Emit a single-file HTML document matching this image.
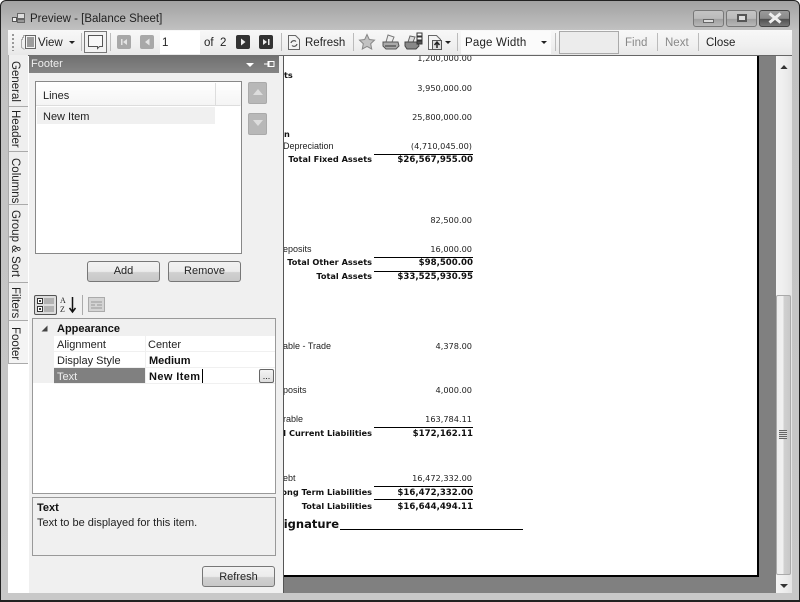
<!DOCTYPE html>
<html><head><meta charset="utf-8"><style>
html,body{margin:0;padding:0;width:800px;height:602px;overflow:hidden;background:#fff}
*{box-sizing:border-box}
.a,.t,.n,.b{position:absolute}
.t{font:11px/18px "Liberation Sans",sans-serif;color:#222;white-space:nowrap}
.m{font-size:11.5px}
.n{font:8.2px/12px "DejaVu Sans",sans-serif;color:#222;white-space:nowrap;text-align:right}
.l{font:9px/12px "Liberation Sans",sans-serif;color:#222;white-space:nowrap;position:absolute}
.nb{font:bold 8.2px/12px "DejaVu Sans",sans-serif;color:#111;white-space:nowrap;position:absolute;text-align:right}
.na{font-size:8.6px;margin-top:1px}
.b{background:linear-gradient(#f2f2f2,#ececec 50%,#d0d0d0 55%,#c8c8c8);border:1px solid #777;border-radius:3px;font:11px/20px "Liberation Sans",sans-serif;color:#222;text-align:center}
.line{position:absolute;background:#000;height:1px;margin-top:1px}
.v{position:absolute;transform-origin:0 0;transform:rotate(90deg);font:11.5px/14px "Liberation Sans",sans-serif;color:#222;white-space:nowrap}
.sep{position:absolute;width:1px;height:18px;top:33px;background:#bbb}
.nav{position:absolute;top:35px;width:14px;height:14px;border-radius:2px}
.tb{position:absolute;left:8px;width:20px;background:#efefef;border:1px solid #aaa;border-top:0;border-right:0}
</style></head><body>
<div class="a" style="left:0;top:0;width:800px;height:602px;background:linear-gradient(#a2a2a2,#c2c2c2 30px,#c8c8c8);border:1px solid #222;border-radius:6px 6px 0 0;border-bottom:2px solid #222"></div>

<!-- Title -->
<svg class="a" style="left:11px;top:12px" width="16" height="14"><rect x="1.500" y="5.500" width="4" height="4" fill="#eee" stroke="#555"/><rect x="6.500" y="1.500" width="7" height="5" fill="#ddd" stroke="#666"/><rect x="6.500" y="7.500" width="7" height="3" fill="#999" stroke="#666"/></svg>
<div class="t m" style="left:30px;top:10px;color:#222">Preview - [Balance Sheet]</div>
<div class="a" style="left:693px;top:10px;width:31px;height:17px;border:1px solid #777;border-radius:3px;background:linear-gradient(#c4c4c4,#bbb 50%,#a0a0a0 55%,#b8b8b8)"></div>
<div class="a" style="left:703px;top:19px;width:11px;height:4px;background:#ddd;border:1px solid #666"></div>
<div class="a" style="left:726px;top:10px;width:31px;height:17px;border:1px solid #777;border-radius:3px;background:linear-gradient(#c4c4c4,#bbb 50%,#a0a0a0 55%,#b8b8b8)"></div>
<div class="a" style="left:737px;top:14px;width:10px;height:8px;border:2px solid #555;background:#ddd"></div>
<div class="a" style="left:759px;top:10px;width:31px;height:17px;border:1px solid #444;border-radius:3px;background:linear-gradient(#9a9a9a,#8a8a8a 50%,#505050 55%,#777)"></div>
<svg class="a" style="left:767px;top:12px" width="16" height="12"><path d="M2.500 1.500l11 9M13.500 1.500l-11 9" stroke="#eee" stroke-width="3" fill="none"/></svg>

<!-- Toolbar -->
<div class="a" style="left:8px;top:30px;width:784px;height:25px;background:linear-gradient(#f8f8f8,#f0f0f0 60%,#e8e8e8)"></div>
<div class="a" style="left:12px;top:34px;width:2px;height:17px;background:repeating-linear-gradient(#999 0 2px,transparent 2px 4px)"></div>
<svg class="a" style="left:19px;top:33px" width="19" height="19"><path d="M6.500 2.500v3M6.500 2.500h-2v2h-1v2h-1v8l3 2" fill="none" stroke="#aaa"/><rect x="6.500" y="2.500" width="10" height="13" fill="#f4f4f4" stroke="#666"/><path d="M8 5h7M8 7h7M8 9h7M8 11h7M8 13h7" stroke="#444"/></svg>
<div class="t m" style="left:38px;top:34px">View</div>
<div class="a" style="left:69px;top:41px;border:3px solid transparent;border-top:3px solid #222;border-bottom:0"></div>
<div class="sep" style="left:81px"></div>
<div class="a" style="left:84px;top:31px;width:23px;height:22px;border:1px solid #777;background:#f2f2f2"></div>
<svg class="a" style="left:86px;top:33px" width="19" height="18"><path d="M2.500 2.500h14v11h-3l-2 2v-2h-9z" fill="#f8f8f8" stroke="#555"/></svg>
<div class="sep" style="left:110px"></div>
<div class="nav" style="left:117px;background:#a8a8a8"></div>
<svg class="a" style="left:117px;top:35px" width="14" height="14"><path d="M4 4h1.500v6H4zM10 4v6L6 7z" fill="#e4e4e4"/></svg>
<div class="nav" style="left:140px;background:#a8a8a8"></div>
<svg class="a" style="left:140px;top:35px" width="14" height="14"><path d="M9.500 3.500v7L5 7z" fill="#e4e4e4"/></svg>
<div class="a" style="left:160px;top:31px;width:40px;height:23px;background:#fff"></div>
<div class="t m" style="left:162px;top:34px">1</div>
<div class="t m" style="left:204px;top:34px">of&nbsp; 2</div>
<div class="nav" style="left:236px;background:#333"></div>
<svg class="a" style="left:236px;top:35px" width="14" height="14"><path d="M5 3.500v7L9.500 7z" fill="#eee"/></svg>
<div class="nav" style="left:259px;background:#333"></div>
<svg class="a" style="left:259px;top:35px" width="14" height="14"><path d="M4 4v6l4-3zM9 4h1.500v6H9z" fill="#eee"/></svg>
<div class="sep" style="left:281px"></div>
<svg class="a" style="left:286px;top:33px" width="16" height="18"><path d="M2.500 2.500h7l4 4v10h-11z" fill="#f4f4f4" stroke="#666"/><path d="M5 10a3 3 0 0 1 5-1.500M11 11a3 3 0 0 1-5 1.500" fill="none" stroke="#555" stroke-width="1.200"/></svg>
<div class="t m" style="left:305px;top:34px">Refresh</div>
<div class="sep" style="left:353px"></div>
<svg class="a" style="left:358px;top:33px" width="18" height="18"><path d="M9 1.500l2.300 5 5.200.6-3.800 3.600 1 5.300L9 13.400 4.300 16l1-5.300L1.500 7.100l5.200-.6z" fill="#c2c2c2" stroke="#888"/></svg>
<svg class="a" style="left:381px;top:33px" width="20" height="18"><path d="M7 2l6 2-2 5H5z" fill="#eee" stroke="#777"/><path d="M2 9h15l1 4-3 3H5l-3-3z" fill="#aaa" stroke="#555"/><path d="M4 13h11" stroke="#333"/></svg>
<svg class="a" style="left:404px;top:31px" width="20" height="20"><path d="M6 5l5 1-2 5H4z" fill="#ddd" stroke="#666"/><path d="M1 11h13l1 4-3 3H3l-2-3z" fill="#888" stroke="#444"/><rect x="13" y="2" width="5" height="3" fill="#fff" stroke="#333"/><rect x="13" y="6" width="5" height="3" fill="#fff" stroke="#333"/><rect x="13" y="10" width="5" height="3" fill="#555" stroke="#333"/></svg>
<svg class="a" style="left:427px;top:33px" width="18" height="18"><path d="M1.500 2.500h8l4 4v10h-12z" fill="#f4f4f4" stroke="#666"/><rect x="5.500" y="7.500" width="9" height="9" fill="#ddd" stroke="#555"/><path d="M10 9v6M7.500 12l2.500-3 2.500 3" fill="none" stroke="#222" stroke-width="1.500"/></svg>
<div class="a" style="left:445px;top:41px;border:3px solid transparent;border-top:3px solid #222;border-bottom:0"></div>
<div class="sep" style="left:457px"></div>
<div class="a" style="left:461px;top:31px;width:90px;height:23px;background:#fbfbfb"></div>
<div class="t m" style="left:465px;top:34px;letter-spacing:.2px">Page Width</div>
<div class="a" style="left:541px;top:41px;border:3px solid transparent;border-top:3px solid #222;border-bottom:0"></div>
<div class="sep" style="left:555px"></div>
<div class="a" style="left:559px;top:31px;width:60px;height:23px;background:#ececec;border:1px solid #aaa"></div>
<div class="t m" style="left:625px;top:34px;color:#888">Find</div>
<div class="sep" style="left:657px"></div>
<div class="t m" style="left:665px;top:34px;color:#888">Next</div>
<div class="sep" style="left:698px"></div>
<div class="t m" style="left:706px;top:34px">Close</div>

<!-- Content frame -->
<div class="a" style="left:8px;top:55px;width:784px;height:538px;background:#808080"></div>
<div class="a" style="left:8px;top:55px;width:275px;height:538px;background:#f0f0f0"></div>
<div class="a" style="left:8px;top:55px;width:21px;height:538px;background:#fff"></div>
<div class="a" style="left:283px;top:55px;width:1px;height:538px;background:#555"></div>
<div class="a" style="left:284px;top:55px;width:475px;height:522px;background:#fff;border-right:2px solid #000;border-bottom:2px solid #000"></div>
<div class="a" style="left:8px;top:55px;width:784px;height:1px;background:#666"></div>

<!-- Tabs -->
<div class="tb" style="top:55px;height:52px"></div><div class="v" style="left:22px;top:61px">General</div>
<div class="tb" style="top:107px;height:45px"></div><div class="v" style="left:22px;top:110px">Header</div>
<div class="tb" style="top:152px;height:53px"></div><div class="v" style="left:22px;top:158px">Columns</div>
<div class="tb" style="top:205px;height:78px"></div><div class="v" style="left:22px;top:210px">Group &amp; Sort</div>
<div class="tb" style="top:283px;height:38px"></div><div class="v" style="left:22px;top:287px">Filters</div>
<div class="a" style="left:8px;top:321px;width:20px;height:43px;background:#f4f4f4;border:1px solid #aaa;border-top:0;border-right:0"></div><div class="v" style="left:22px;top:327px">Footer</div>

<!-- Panel -->
<div class="a" style="left:29px;top:55px;width:250px;height:18px;background:linear-gradient(#6f6f6f,#858585)"></div>
<div class="t" style="left:31px;top:55px;color:#eee">Footer</div>
<div class="a" style="left:246px;top:63px;border:4px solid transparent;border-top:4px solid #fff;border-bottom:0"></div>
<svg class="a" style="left:263px;top:59px" width="12" height="10"><path d="M1 5h4M5 2.500h1v5H5zM6 2.500h5v5H6z" fill="none" stroke="#fff"/></svg>

<div class="a" style="left:35px;top:81px;width:207px;height:173px;background:#fff;border:1px solid #888"></div>
<div class="a" style="left:36px;top:82px;width:205px;height:24px;background:linear-gradient(#fff,#f4f4f4)"></div>
<div class="a" style="left:36px;top:105px;width:204px;height:1px;background:#ddd"></div>
<div class="a" style="left:215px;top:83px;width:1px;height:22px;background:#ddd"></div>
<div class="t" style="left:43px;top:87px">Lines</div>
<div class="a" style="left:37px;top:107px;width:178px;height:17px;background:#f0f0f0"></div>
<div class="t" style="left:43px;top:108px">New Item</div>
<div class="a" style="left:248px;top:82px;width:19px;height:22px;background:#b8b8b8;border:1px solid #aaa;border-radius:2px"></div>
<div class="a" style="left:253px;top:89px;border:5px solid transparent;border-bottom:6px solid #ddd;border-top:0"></div>
<div class="a" style="left:248px;top:113px;width:19px;height:22px;background:#b8b8b8;border:1px solid #aaa;border-radius:2px"></div>
<div class="a" style="left:253px;top:120px;border:5px solid transparent;border-top:6px solid #ddd;border-bottom:0"></div>

<div class="b" style="left:87px;top:261px;width:73px;height:21px;line-height:19px">Add</div>
<div class="b" style="left:168px;top:261px;width:73px;height:21px;line-height:19px">Remove</div>

<!-- Property grid toolbar -->
<div class="a" style="left:34px;top:295px;width:23px;height:20px;background:#ddd;border:1px solid #555;border-radius:2px"></div>
<svg class="a" style="left:36px;top:297px" width="20" height="16"><rect x="1.500" y="1.500" width="5" height="5" fill="#fff" stroke="#333"/><rect x="1.500" y="9.500" width="5" height="5" fill="#fff" stroke="#333"/><path d="M3 4h2M4 3v2M3 12h2M4 11v2" stroke="#000"/><path d="M8 2h10M8 4h10M8 6h10M8 10h10M8 12h10M8 14h10" stroke="#888"/></svg>
<div class="a" style="left:60px;top:296px;font:8px/9px 'Liberation Serif',serif;color:#222">A<br>Z</div>
<svg class="a" style="left:68px;top:296px" width="9" height="18"><path d="M4.500 1v14M1.500 12l3 4 3-4" fill="none" stroke="#111" stroke-width="1.500"/></svg>
<div class="a" style="left:82px;top:295px;width:1px;height:20px;background:#aaa"></div>
<svg class="a" style="left:88px;top:296px" width="18" height="18"><rect x=".5" y="1.500" width="16" height="14" fill="#d4d4d4" stroke="#aaa"/><path d="M3 6h11M3 9h4M9 9h5M3 12h11" stroke="#999"/></svg>

<!-- Property grid -->
<div class="a" style="left:32px;top:318px;width:244px;height:176px;background:#fff;border:1px solid #999"></div>
<div class="a" style="left:33px;top:319px;width:21px;height:64px;background:#f0f0f0"></div>
<div class="a" style="left:54px;top:319px;width:221px;height:17px;background:#f0f0f0"></div>
<svg class="a" style="left:40px;top:324px" width="9" height="9"><path d="M1.500 7.500h6v-6z" fill="#444"/></svg>
<div class="t" style="left:57px;top:320px;font-weight:bold;color:#111">Appearance</div>
<div class="a" style="left:54px;top:351px;width:221px;height:1px;background:#f0f0f0"></div>
<div class="a" style="left:54px;top:367px;width:221px;height:1px;background:#f0f0f0"></div>
<div class="a" style="left:54px;top:383px;width:221px;height:1px;background:#f0f0f0"></div>
<div class="a" style="left:145px;top:336px;width:1px;height:47px;background:#f0f0f0"></div>
<div class="t" style="left:57px;top:336px">Alignment</div>
<div class="t" style="left:148px;top:336px">Center</div>
<div class="t" style="left:57px;top:352px">Display Style</div>
<div class="t" style="left:149px;top:352px;font-weight:bold;color:#111">Medium</div>
<div class="a" style="left:54px;top:368px;width:91px;height:15px;background:#808080"></div>
<div class="t" style="left:57px;top:368px;color:#eee">Text</div>
<div class="t" style="left:149px;top:368px;font-weight:bold;color:#111;letter-spacing:.4px">New Item</div>
<div class="a" style="left:202px;top:369px;width:1px;height:14px;background:#000"></div>
<div class="a" style="left:259px;top:369px;width:15px;height:14px;background:linear-gradient(#f4f4f4,#ddd);border:1px solid #666;border-radius:2px;font:9px/12px 'Liberation Sans',sans-serif;color:#111;text-align:center">...</div>

<!-- Help -->
<div class="a" style="left:32px;top:497px;width:244px;height:59px;background:#f0f0f0;border:1px solid #999"></div>
<div class="t" style="left:37px;top:499px;font-weight:bold;color:#111">Text</div>
<div class="t" style="left:37px;top:514px">Text to be displayed for this item.</div>
<div class="b" style="left:202px;top:566px;width:73px;height:21px">Refresh</div>

<!-- Scrollbar -->
<div class="a" style="left:776px;top:56px;width:16px;height:537px;background:linear-gradient(90deg,#f4f4f4,#eee 50%,#e4e4e4)"></div>
<div class="a" style="left:780px;top:65px;border:4px solid transparent;border-bottom:4px solid #333;border-top:0;transform:scaleX(.9)"></div>
<div class="a" style="left:776px;top:295px;width:15px;height:280px;background:linear-gradient(90deg,#eee,#f0f0f0 45%,#d0d0d0 55%,#c8c8c8);border:1px solid #aaa;border-radius:2px"></div>
<div class="a" style="left:779px;top:430px;width:8px;height:9px;background:repeating-linear-gradient(#666 0 1px,#ddd 1px 2px)"></div>
<div class="a" style="left:780px;top:584px;border:4px solid transparent;border-top:4px solid #333;border-bottom:0"></div>

<!-- Report -->
<div class="a" style="left:284px;top:56px;width:260px;height:518px;overflow:hidden">
<div class="a" style="left:0;top:-1px;width:190px;height:518px">
<div class="n" style="right:2px;top:-3px">1,200,000.00</div>
<div class="nb" style="left:0;top:14px">ts</div>
<div class="n" style="right:2px;top:27px">3,950,000.00</div>
<div class="n" style="right:2px;top:56px">25,800,000.00</div>
<div class="nb" style="left:0;top:73px">n</div>
<div class="l" style="left:-1px;top:85px">Depreciation</div>
<div class="n" style="right:2px;top:85px">(4,710,045.00)</div>
<div class="line" style="left:90px;top:98px;width:99px"></div>
<div class="nb" style="right:102px;top:98px">Total Fixed Assets</div>
<div class="nb na" style="right:1px;top:98px">$26,567,955.00</div>
<div class="n" style="right:2px;top:159px">82,500.00</div>
<div class="l" style="left:-1px;top:188px">eposits</div>
<div class="n" style="right:2px;top:188px">16,000.00</div>
<div class="line" style="left:90px;top:201px;width:99px"></div>
<div class="nb" style="right:102px;top:201px">Total Other Assets</div>
<div class="nb na" style="right:1px;top:201px">$98,500.00</div>
<div class="line" style="left:90px;top:215px;width:99px"></div>
<div class="nb" style="right:102px;top:215px">Total Assets</div>
<div class="nb na" style="right:1px;top:215px">$33,525,930.95</div>
<div class="l" style="left:-1px;top:285px">able - Trade</div>
<div class="n" style="right:2px;top:285px">4,378.00</div>
<div class="l" style="left:-1px;top:329px">posits</div>
<div class="n" style="right:2px;top:329px">4,000.00</div>
<div class="l" style="left:-1px;top:358px">rable</div>
<div class="n" style="right:2px;top:358px">163,784.11</div>
<div class="line" style="left:90px;top:371px;width:99px"></div>
<div class="nb" style="right:102px;top:372px">l Current Liabilities</div>
<div class="nb na" style="right:1px;top:372px">$172,162.11</div>
<div class="l" style="left:-1px;top:417px">ebt</div>
<div class="n" style="right:2px;top:417px">16,472,332.00</div>
<div class="line" style="left:90px;top:430px;width:99px"></div>
<div class="nb" style="right:102px;top:431px">ong Term Liabilities</div>
<div class="nb na" style="right:1px;top:431px">$16,472,332.00</div>
<div class="line" style="left:90px;top:443px;width:99px"></div>
<div class="nb" style="right:102px;top:445px">Total Liabilities</div>
<div class="nb na" style="right:1px;top:445px">$16,644,494.11</div>
<div class="a" style="left:0;top:461px;width:55px;height:16px;overflow:hidden"><div class="a" style="right:0;top:0;font:bold 11.5px/16px 'DejaVu Sans',sans-serif;color:#111;white-space:nowrap">Signature</div></div>
<div class="line" style="left:56px;top:473px;width:183px"></div>
</div>
</div>
</body></html>
